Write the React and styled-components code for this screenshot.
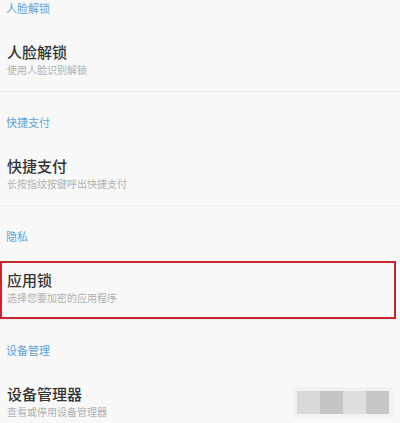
import React from 'react';
import styled, { createGlobalStyle } from 'styled-components';

const sections = [
  { label: '人脸解锁', title: '人脸解锁', desc: '使用人脸识别解锁' },
  { label: '快捷支付', title: '快捷支付', desc: '长按指纹按键呼出快捷支付' },
  { label: '隐私', title: '应用锁', desc: '选择您要加密的应用程序', highlight: true },
  { label: '设备管理', title: '设备管理器', desc: '查看或停用设备管理器' },
];

const App = () => (
  <Page>
    <GlobalStyle />
    {sections.map((s, i) => (
      <Section key={s.label} $last={i === sections.length - 1}>
        <LabelBlock $first={i === 0}>
          <Label>{s.label}</Label>
        </LabelBlock>
        <Item $highlight={s.highlight}>
          <Title>{s.title}</Title>
          <Desc>{s.desc}</Desc>
        </Item>
      </Section>
    ))}
    <Watermark>
      <Tile $shade="#d9d9d9" />
      <Tile $shade="#c5c5c5" />
      <Tile $shade="#dedede" />
      <Tile $shade="#c7c7c7" />
    </Watermark>
  </Page>
);

const GlobalStyle = createGlobalStyle`
  html, body {
    margin: 0;
    padding: 0;
    background: #f8f8f8;
  }
  body {
    font-family: "Noto Sans CJK SC", "Noto Sans", sans-serif;
  }
`;

const Page = styled.div`
  position: relative;
  width: 400px;
  height: 423px;
  overflow: hidden;
  background: #f8f8f8;
`;

const Section = styled.div`
  display: flex;
  flex-direction: column;
  border-bottom: ${props => (props.$last ? 'none' : '1px solid #ececec')};
`;

const LabelBlock = styled.div`
  height: ${props => (props.$first ? '33px' : '55px')};
  padding-top: ${props => (props.$first ? '0' : '22px')};
  box-sizing: border-box;
  padding-left: 6px;
`;

const Label = styled.div`
  font-size: 11px;
  line-height: 16px;
  color: #5ea3d6;
`;

const Item = styled.div`
  height: 58px;
  box-sizing: border-box;
  padding: ${props => (props.$highlight ? '6px 0 0 5px' : '8px 0 0 7px')};
  margin-right: ${props => (props.$highlight ? '4px' : '0')};
  border: ${props => (props.$highlight ? '2px solid #c8262e' : 'none')};
  display: flex;
  flex-direction: column;
`;

const Title = styled.div`
  font-size: 15px;
  line-height: 22px;
  font-weight: 500;
  color: #333333;
`;

const Desc = styled.div`
  font-size: 10px;
  line-height: 14px;
  color: #b0b0b0;
`;

const Watermark = styled.div`
  position: absolute;
  left: 297px;
  top: 391px;
  display: flex;
  height: 23px;
  box-shadow: 0 0 0 4px #f2f2f2;
`;

const Tile = styled.div`
  width: 23px;
  height: 100%;
  background: ${props => props.$shade};
`;

export default App;
